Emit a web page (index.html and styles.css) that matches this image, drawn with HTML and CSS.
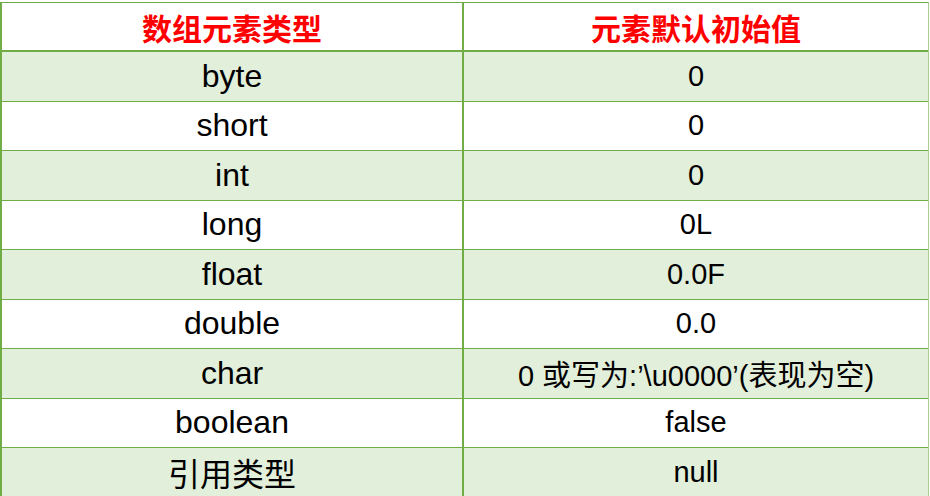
FILE: index.html
```html
<!DOCTYPE html>
<html lang="zh-CN">
<head>
<meta charset="utf-8">
<title>数组元素默认初始值</title>
<link rel="stylesheet" href="styles.css">
</head>
<body>
<div class="table">
  <div class="row head">
    <div class="cell left">数组元素类型</div>
    <div class="cell right">元素默认初始值</div>
  </div>
  <div class="row fill">
    <div class="cell left">byte</div>
    <div class="cell right">0</div>
  </div>
  <div class="row">
    <div class="cell left">short</div>
    <div class="cell right">0</div>
  </div>
  <div class="row fill">
    <div class="cell left">int</div>
    <div class="cell right">0</div>
  </div>
  <div class="row">
    <div class="cell left">long</div>
    <div class="cell right">0L</div>
  </div>
  <div class="row fill">
    <div class="cell left">float</div>
    <div class="cell right">0.0F</div>
  </div>
  <div class="row">
    <div class="cell left">double</div>
    <div class="cell right">0.0</div>
  </div>
  <div class="row fill">
    <div class="cell left">char</div>
    <div class="cell right">0 或写为:’\u0000’(表现为空)</div>
  </div>
  <div class="row">
    <div class="cell left">boolean</div>
    <div class="cell right">false</div>
  </div>
  <div class="row fill">
    <div class="cell left">引用类型</div>
    <div class="cell right">null</div>
  </div>
</div>
</body>
</html>
```
FILE: styles.css
```css
html, body {
  margin: 0;
  padding: 0;
  background: #ffffff;
}

body {
  width: 930px;
  height: 496px;
  overflow: hidden;
  font-family: "Liberation Sans", "Noto Sans CJK SC", sans-serif;
  color: #000000;
}

.table {
  width: 929px;
  margin-top: 2px;
  border-top: 1px solid #70ad47;
  border-left: 2px solid #70ad47;
  border-right: 1px solid #a9d08e;
  box-sizing: border-box;
}

.row {
  display: grid;
  grid-template-columns: 462px 1fr;
  height: 49.5px;
  box-sizing: border-box;
  border-bottom: 1px solid #70ad47;
}

.row.head {
  height: 49px;
  border-bottom: 2px solid #70ad47;
}

.row.fill {
  background: #e2efda;
}

.cell {
  display: flex;
  align-items: center;
  justify-content: center;
  white-space: nowrap;
}

.cell.left {
  border-right: 2px solid #70ad47;
  font-size: 32px;
}

.cell.right {
  font-size: 29px;
}

.head .cell {
  font-family: "Noto Sans CJK SC", sans-serif;
  font-weight: 700;
  font-size: 30px;
  color: #ff0000;
}
```
